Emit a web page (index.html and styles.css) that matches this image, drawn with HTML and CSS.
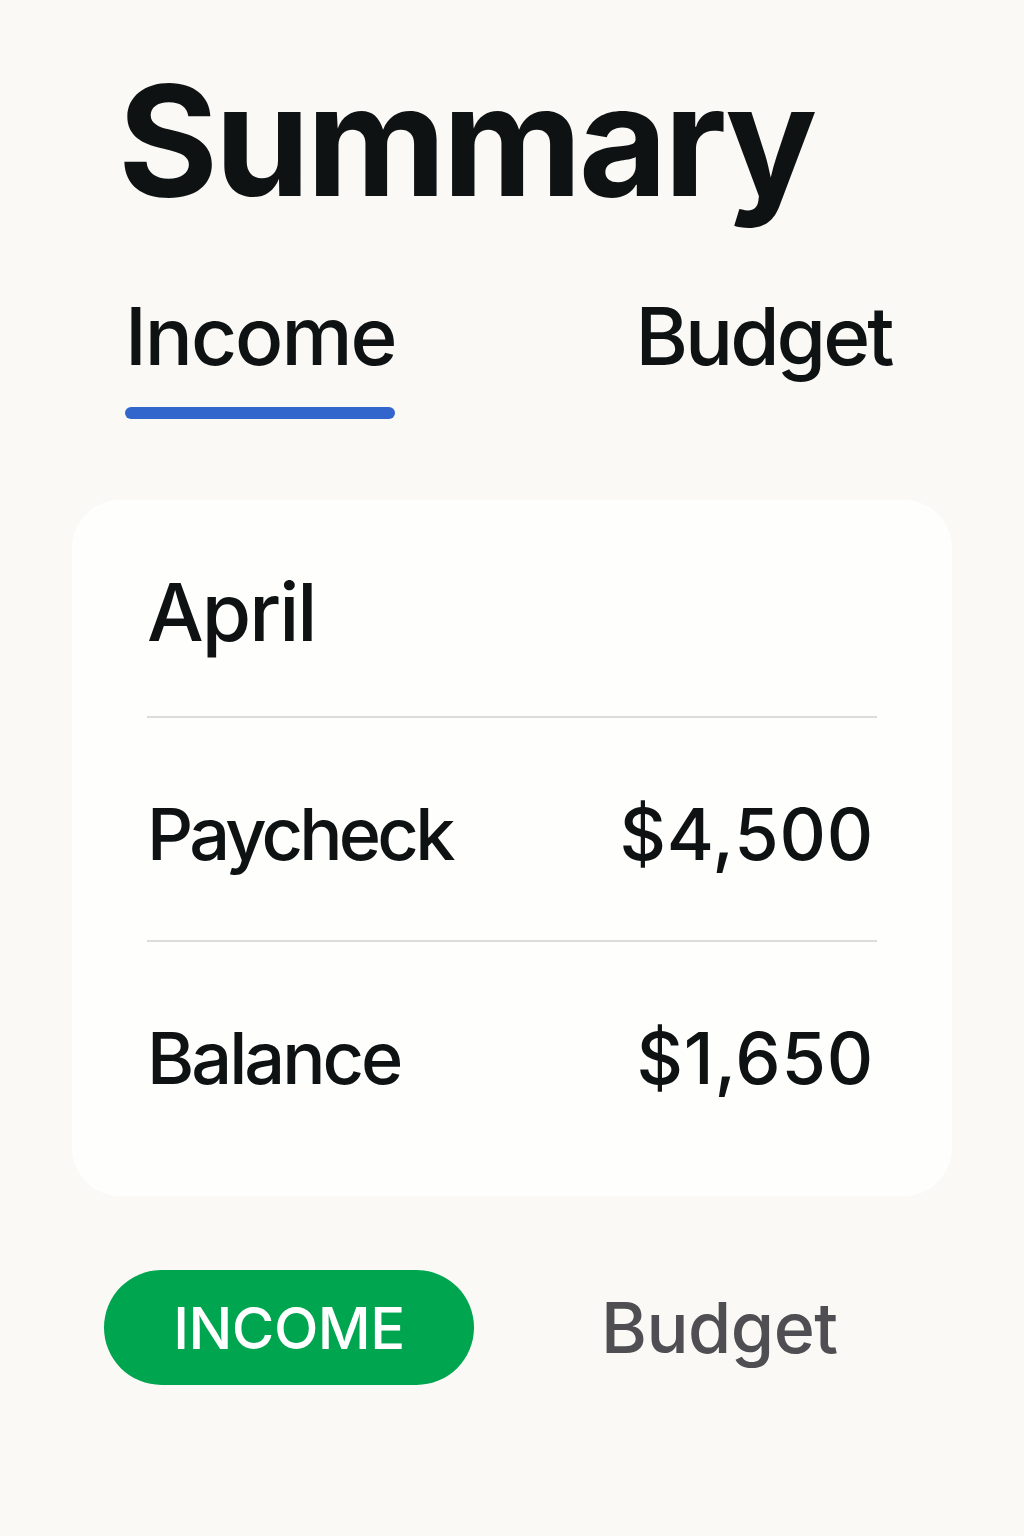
FILE: index.html
```html
<!DOCTYPE html>
<html lang="en">
<head>
<meta charset="utf-8">
<title>Summary</title>
<link rel="stylesheet" href="styles.css">
</head>
<body>
<main class="page">
  <h1 class="title">Summary</h1>

  <nav class="tabs">
    <div class="tab tab-active">
      <span class="tab-label">Income</span>
      <span class="tab-indicator"></span>
    </div>
    <div class="tab">
      <span class="tab-label tab-label-tight">Budget</span>
    </div>
  </nav>

  <section class="card">
    <div class="row row-month">
      <span class="month">April</span>
    </div>
    <div class="row row-item row-paycheck">
      <span class="label label-tight">Paycheck</span>
      <span class="amount">$4,500</span>
    </div>
    <div class="row row-item row-balance">
      <span class="label">Balance</span>
      <span class="amount">$1,650</span>
    </div>
  </section>

  <div class="switcher">
    <button class="pill">INCOME</button>
    <span class="switch-link">Budget</span>
  </div>
</main>
</body>
</html>
```

FILE: styles.css
```css
* {
  box-sizing: border-box;
}

html, body {
  margin: 0;
  padding: 0;
}

body {
  background: #faf9f5;
  font-family: Inter, "Noto Sans", "Liberation Sans", sans-serif;
  color: #0e1213;
  width: 1024px;
  min-height: 1536px;
}

.page {
  padding-top: 64px;
}

.title {
  margin: 0 0 0 118px;
  font-size: 153px;
  line-height: 154px;
  font-weight: 700;
  letter-spacing: -3.5px;
}

.tabs {
  display: flex;
  align-items: flex-start;
  margin: 78px 0 0 125px;
}

.tab {
  display: flex;
  flex-direction: column;
}

.tab-label {
  font-size: 80px;
  line-height: 80px;
  font-weight: 500;
  letter-spacing: -2px;
}

.tab-label-tight {
  letter-spacing: -3px;
}

.tab-active {
  margin-right: 240px;
}

.tab-indicator {
  display: block;
  height: 12px;
  margin: 31px 0 0 0;
  width: 270px;
  border-radius: 6px;
  background: #3366cc;
}

.card {
  margin: 81px 0 0 72px;
  width: 880px;
  background: #fefefd;
  border-radius: 48px;
  padding: 0 75px;
}

.row {
  display: flex;
  align-items: center;
  justify-content: space-between;
}

.row-month {
  padding: 72px 0 64px;
}

.month {
  font-size: 80px;
  line-height: 80px;
  font-weight: 500;
  letter-spacing: -2px;
}

.row-item {
  border-top: 2px solid #dcdcdc;
}

.row-paycheck {
  padding: 80px 0 70px;
}

.row-balance {
  padding: 80px 0 102px;
}

.label,
.amount {
  font-size: 72px;
  line-height: 72px;
  font-weight: 500;
}

.label {
  letter-spacing: -3px;
}

.label-tight {
  letter-spacing: -3.75px;
}

.amount {
  letter-spacing: 0.8px;
  margin-right: 3px;
}

.switcher {
  display: flex;
  align-items: center;
  margin: 74px 0 0 104px;
}

.pill {
  width: 370px;
  height: 115px;
  border: none;
  border-radius: 58px;
  background: #00a550;
  color: #ffffff;
  font-family: inherit;
  font-size: 58px;
  font-weight: 500;
  letter-spacing: -0.5px;
  padding: 0;
  display: flex;
  align-items: center;
  justify-content: center;
}

.switch-link {
  margin-left: 127px;
  font-size: 70px;
  line-height: 70px;
  font-weight: 500;
  color: #4f4f53;
  letter-spacing: -0.5px;
}
```
